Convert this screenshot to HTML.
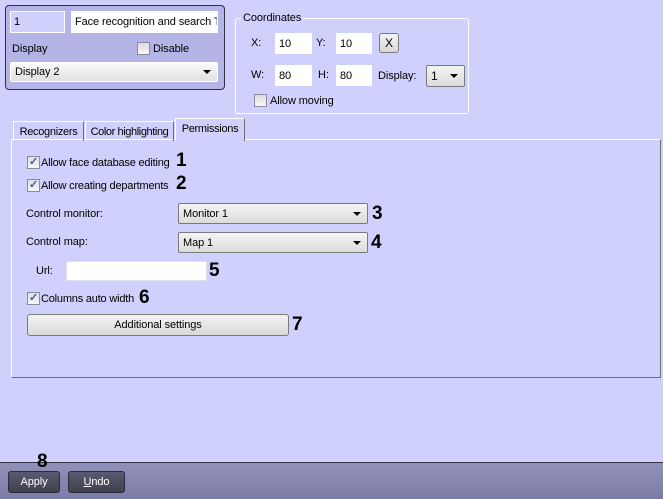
<!DOCTYPE html>
<html><head><style>
*{box-sizing:border-box;margin:0;padding:0}
body{width:663px;height:499px;background:#d0d0fc;font-family:"Liberation Sans",sans-serif;font-size:11px;color:#000;position:relative;overflow:hidden;white-space:nowrap;letter-spacing:-0.1px}
.a{position:absolute}
.inp{position:absolute;background:#fff;border:1px solid #b8b8d0;padding:0 3px;font-size:11px;white-space:nowrap;overflow:hidden;display:flex;align-items:center}
.dd{position:absolute;border:1px solid #7a7a7a;border-radius:2px;background:linear-gradient(#f4f4f4,#dcdcdc);padding:0 4px;font-size:11px;display:flex;align-items:center}
.dd:after{content:"";position:absolute;right:6px;top:50%;margin-top:-2px;border-left:4px solid transparent;border-right:4px solid transparent;border-top:4px solid #000}
.cb{position:absolute;width:13px;height:13px;border:1px solid #8a8a9a;background:linear-gradient(#dcdce4,#f8f8f8)}
.cb.on:after{content:"✓";position:absolute;left:1px;top:-2px;font-size:11px;color:#4a5a8a;font-weight:bold}
.num{position:absolute;font-weight:bold;font-size:19px;line-height:19px}
.btn{position:absolute;border:1px solid #7a7a7a;border-radius:3px;background:linear-gradient(#f4f4f4,#d8d8d8);text-align:center;font-size:11px}
.tab{position:absolute;border:1px solid #fff;border-right-color:#707070;border-bottom:none;padding:4px 0 0;text-align:center;font-size:11px;height:20px}
</style></head><body>
<div class="a" style="left:5px;top:5px;width:220px;height:85px;background:#b4b4e6;border:1px solid #303040;border-radius:4px"></div>
<div class="inp" style="left:10px;top:11px;width:55px;height:22px;background:#d0d0fc;border-color:#fff">1</div>
<div class="inp" style="left:71px;top:11px;width:147px;height:22px;border-color:#fff">Face recognition and search T</div>
<div class="a" style="left:12px;top:43px">Display</div>
<div class="cb" style="left:137px;top:42px"></div>
<div class="a" style="left:153px;top:43px">Disable</div>
<div class="dd" style="left:10px;top:62px;width:208px;height:20px;border-color:#fff;background:linear-gradient(#fafafa,#e0e0e0)">Display 2</div>

<div class="a" style="left:235px;top:18px;width:234px;height:96px;border:1px solid #fff;border-radius:3px"></div>
<div class="a" style="left:241px;top:12px;background:#d0d0fc;padding:0 2px">Coordinates</div>
<div class="a" style="left:251px;top:37px">X:</div>
<div class="inp" style="left:275px;top:33px;width:37px;height:21px;border-color:#fff">10</div>
<div class="a" style="left:316px;top:37px">Y:</div>
<div class="inp" style="left:336px;top:33px;width:36px;height:21px;border-color:#fff">10</div>
<div class="btn" style="left:379px;top:33px;width:20px;height:20px;line-height:18px;font-size:12px">X</div>
<div class="a" style="left:251px;top:69px">W:</div>
<div class="inp" style="left:275px;top:65px;width:37px;height:21px;border-color:#fff">80</div>
<div class="a" style="left:318px;top:69px">H:</div>
<div class="inp" style="left:336px;top:65px;width:36px;height:21px;border-color:#fff">80</div>
<div class="a" style="left:378px;top:70px">Display:</div>
<div class="dd" style="left:426px;top:65px;width:39px;height:22px;font-size:12px">1</div>
<div class="cb" style="left:254px;top:94px"></div>
<div class="a" style="left:270px;top:95px">Allow moving</div>

<div class="a" style="left:11px;top:139px;width:650px;height:239px;border:1px solid #fff;border-right-color:#707070;border-bottom-color:#707070"></div>
<div class="tab" style="left:13px;top:121px;width:71px;letter-spacing:-0.3px">Recognizers</div>
<div class="tab" style="left:85px;top:121px;width:89px;letter-spacing:-0.4px">Color highlighting</div>
<div class="tab" style="left:175px;top:118px;width:70px;height:23px;background:#d0d0fc;letter-spacing:-0.3px">Permissions</div>

<div class="cb on" style="left:27px;top:156px"></div>
<div class="a" style="left:41px;top:157px;letter-spacing:-0.2px">Allow face database editing</div>
<div class="num" style="left:176px;top:151px">1</div>
<div class="cb on" style="left:27px;top:179px"></div>
<div class="a" style="left:41px;top:180px;letter-spacing:-0.2px">Allow creating departments</div>
<div class="num" style="left:176px;top:174px">2</div>
<div class="a" style="left:26px;top:208px">Control monitor:</div>
<div class="dd" style="left:178px;top:203px;width:190px;height:21px">Monitor 1</div>
<div class="num" style="left:372px;top:204px">3</div>
<div class="a" style="left:26px;top:236px">Control map:</div>
<div class="dd" style="left:178px;top:232px;width:190px;height:21px">Map 1</div>
<div class="num" style="left:371px;top:233px">4</div>
<div class="a" style="left:36px;top:265px">Url:</div>
<div class="inp" style="left:66px;top:261px;width:141px;height:20px;border-color:#e0e0f0"></div>
<div class="num" style="left:209px;top:261px">5</div>
<div class="cb on" style="left:27px;top:292px"></div>
<div class="a" style="left:41px;top:293px;letter-spacing:-0.2px">Columns auto width</div>
<div class="num" style="left:139px;top:288px">6</div>
<div class="btn" style="left:27px;top:314px;width:262px;height:22px;line-height:20px">Additional settings</div>
<div class="num" style="left:292px;top:315px">7</div>

<div class="a" style="left:0;top:462px;width:663px;height:37px;background:linear-gradient(#9090b8,#7c7ca8);border-top:1px solid #303040"></div>
<div class="num" style="left:37px;top:452px">8</div>
<div class="btn" style="left:8px;top:471px;width:52px;height:22px;line-height:20px;background:linear-gradient(#5a5a70,#40404e);color:#fff;border-color:#2a2a3a">Apply</div>
<div class="btn" style="left:68px;top:471px;width:57px;height:22px;line-height:20px;background:linear-gradient(#5a5a70,#40404e);color:#fff;border-color:#2a2a3a"><u>U</u>ndo</div>
</body></html>
